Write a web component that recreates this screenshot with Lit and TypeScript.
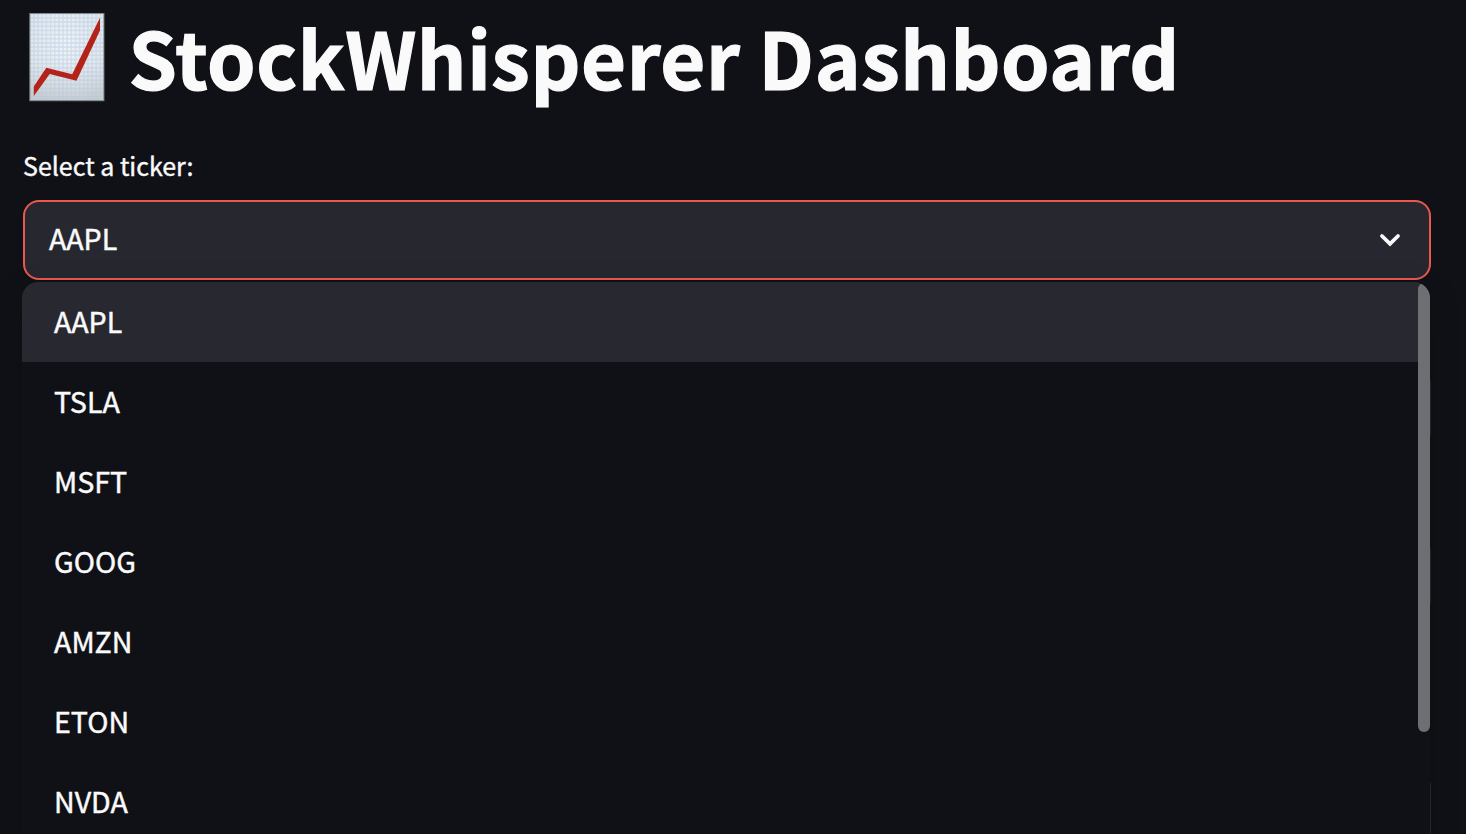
import { LitElement, html, css } from "lit";
import { customElement, state } from "lit/decorators.js";

@customElement("chart-emoji")
class ChartEmoji extends LitElement {
  static styles = css`
    :host { display: block; width: 76px; height: 89px; }
    .icon { display: block; }
  `;
  render() {
    return html`<svg class="icon" width="76" height="89" viewBox="0 0 76 89" aria-hidden="true">
      <defs>
        <linearGradient id="paper" x1="0" y1="0" x2="0" y2="1">
          <stop offset="0" stop-color="#dfe3e8" />
          <stop offset="0.55" stop-color="#e1e2e4" />
          <stop offset="1" stop-color="#c9c9ca" />
        </linearGradient>
        <radialGradient id="glow" cx="0.5" cy="0.35" r="0.7">
          <stop offset="0" stop-color="#f5f5f6" stop-opacity="0.85" />
          <stop offset="1" stop-color="#f5f5f6" stop-opacity="0" />
        </radialGradient>
        <pattern id="grid" width="4.15" height="4.15" patternUnits="userSpaceOnUse">
          <path d="M0.8 0V4.15M0 0.8H4.15" stroke="#a6c8e6" stroke-width="1.1" stroke-opacity="0.55" />
        </pattern>
      </defs>
      <rect x="0.9" y="0.5" width="74" height="87.2" fill="url(#paper)" />
      <rect x="0.9" y="0.5" width="74" height="87.2" fill="url(#glow)" />
      <rect x="0.9" y="0.5" width="74" height="87.2" fill="url(#grid)" />
      <rect x="0.9" y="0.5" width="74" height="87.2" fill="none" stroke="#85898d" stroke-width="1" />
      <path d="M4.8 73.5 17.3 54.8 43.2 61.2 71 4.8V17.5L47.5 67.8 20.7 61 4.8 83Z" fill="#b4231a" />
    </svg>`;
  }
}

@customElement("ticker-select")
class TickerSelect extends LitElement {
  static styles = css`
    :host { display: block; position: relative; z-index: 1; }
    .control {
      display: flex; align-items: center; justify-content: space-between;
      box-sizing: border-box; height: 80px; padding: 0 27px 0 24px;
      border: 2px solid #eb5851; border-radius: 16px; background: #272730;
    }
    .value, .option { font-size: 28.6px; -webkit-text-stroke: 0.45px currentColor; }
    .value { line-height: 40px; padding-bottom: 4px; }
    .option { line-height: 40px; }
    .chevron { display: block; }
    .menu {
      position: absolute; top: 82px; left: -1px; width: 1408px; height: 600px;
      overflow: hidden; border-radius: 16px; background: #101116;
      box-shadow: 0 8px 32px rgba(0, 0, 0, 0.16);
    }
    .option { height: 80px; box-sizing: border-box; padding: 19px 32px 21px; }
    .option.active { background: #282830; }
    .thumb {
      position: absolute; top: 1px; right: 0; width: 12px; height: 449px;
      border-radius: 6px; background: #6e6f72;
    }
  `;
  @state() private tickers = ["AAPL", "TSLA", "MSFT", "GOOG", "AMZN", "ETON", "NVDA"];
  @state() private selected = "AAPL";
  render() {
    return html`
      <div class="control" role="combobox" aria-expanded="true">
        <span class="value">${this.selected}</span>
        <svg class="chevron" width="24" height="24" viewBox="0 0 24 24">
          <path d="M4 8 12 15.8 20 8" fill="none" stroke="#fafafa" stroke-width="3.8" stroke-linecap="round" />
        </svg>
      </div>
      <div class="menu" role="listbox">
        ${this.tickers.map((t) => html`<div class="option ${t === this.selected ? "active" : ""}" role="option">${t}</div>`)}
        <div class="thumb"></div>
      </div>
    `;
  }
}

@customElement("app-root")
class AppRoot extends LitElement {
  static styles = css`
    :host {
      display: block; height: 834px; box-sizing: border-box; overflow: hidden;
      background: #101116; color: #fafafa; padding: 0 35px 0 23px;
      font-family: "Noto Sans CJK JP", "Noto Sans CJK SC", sans-serif;
    }
    .heading { display: flex; height: 146px; padding: 0 0 0 6px; box-sizing: border-box; }
    .emoji { margin-top: 13px; }
    .title {
      margin: 0 0 0 23.5px; height: 113px; font-size: 77.7px; line-height: 113px;
      letter-spacing: 0.58px; font-weight: 700; white-space: nowrap;
      -webkit-text-stroke: 1.2px currentColor;
    }
    .label { height: 54px; font-size: 25px; line-height: 38px; -webkit-text-stroke: 0.4px currentColor; }
    .field { height: 80px; margin-top: 88px; border-radius: 16px; background: #272730; }
    .panel { height: 120px; margin-top: 161px; border-radius: 8px; background: #272730; }
  `;
  render() {
    return html`
      <div class="heading"><chart-emoji class="emoji"></chart-emoji><h1 class="title">StockWhisperer Dashboard</h1></div>
      <div class="label">Select a ticker:</div>
      <ticker-select></ticker-select>
      <div class="field"></div>
      <div class="field"></div>
      <div class="panel"></div>
    `;
  }
}
